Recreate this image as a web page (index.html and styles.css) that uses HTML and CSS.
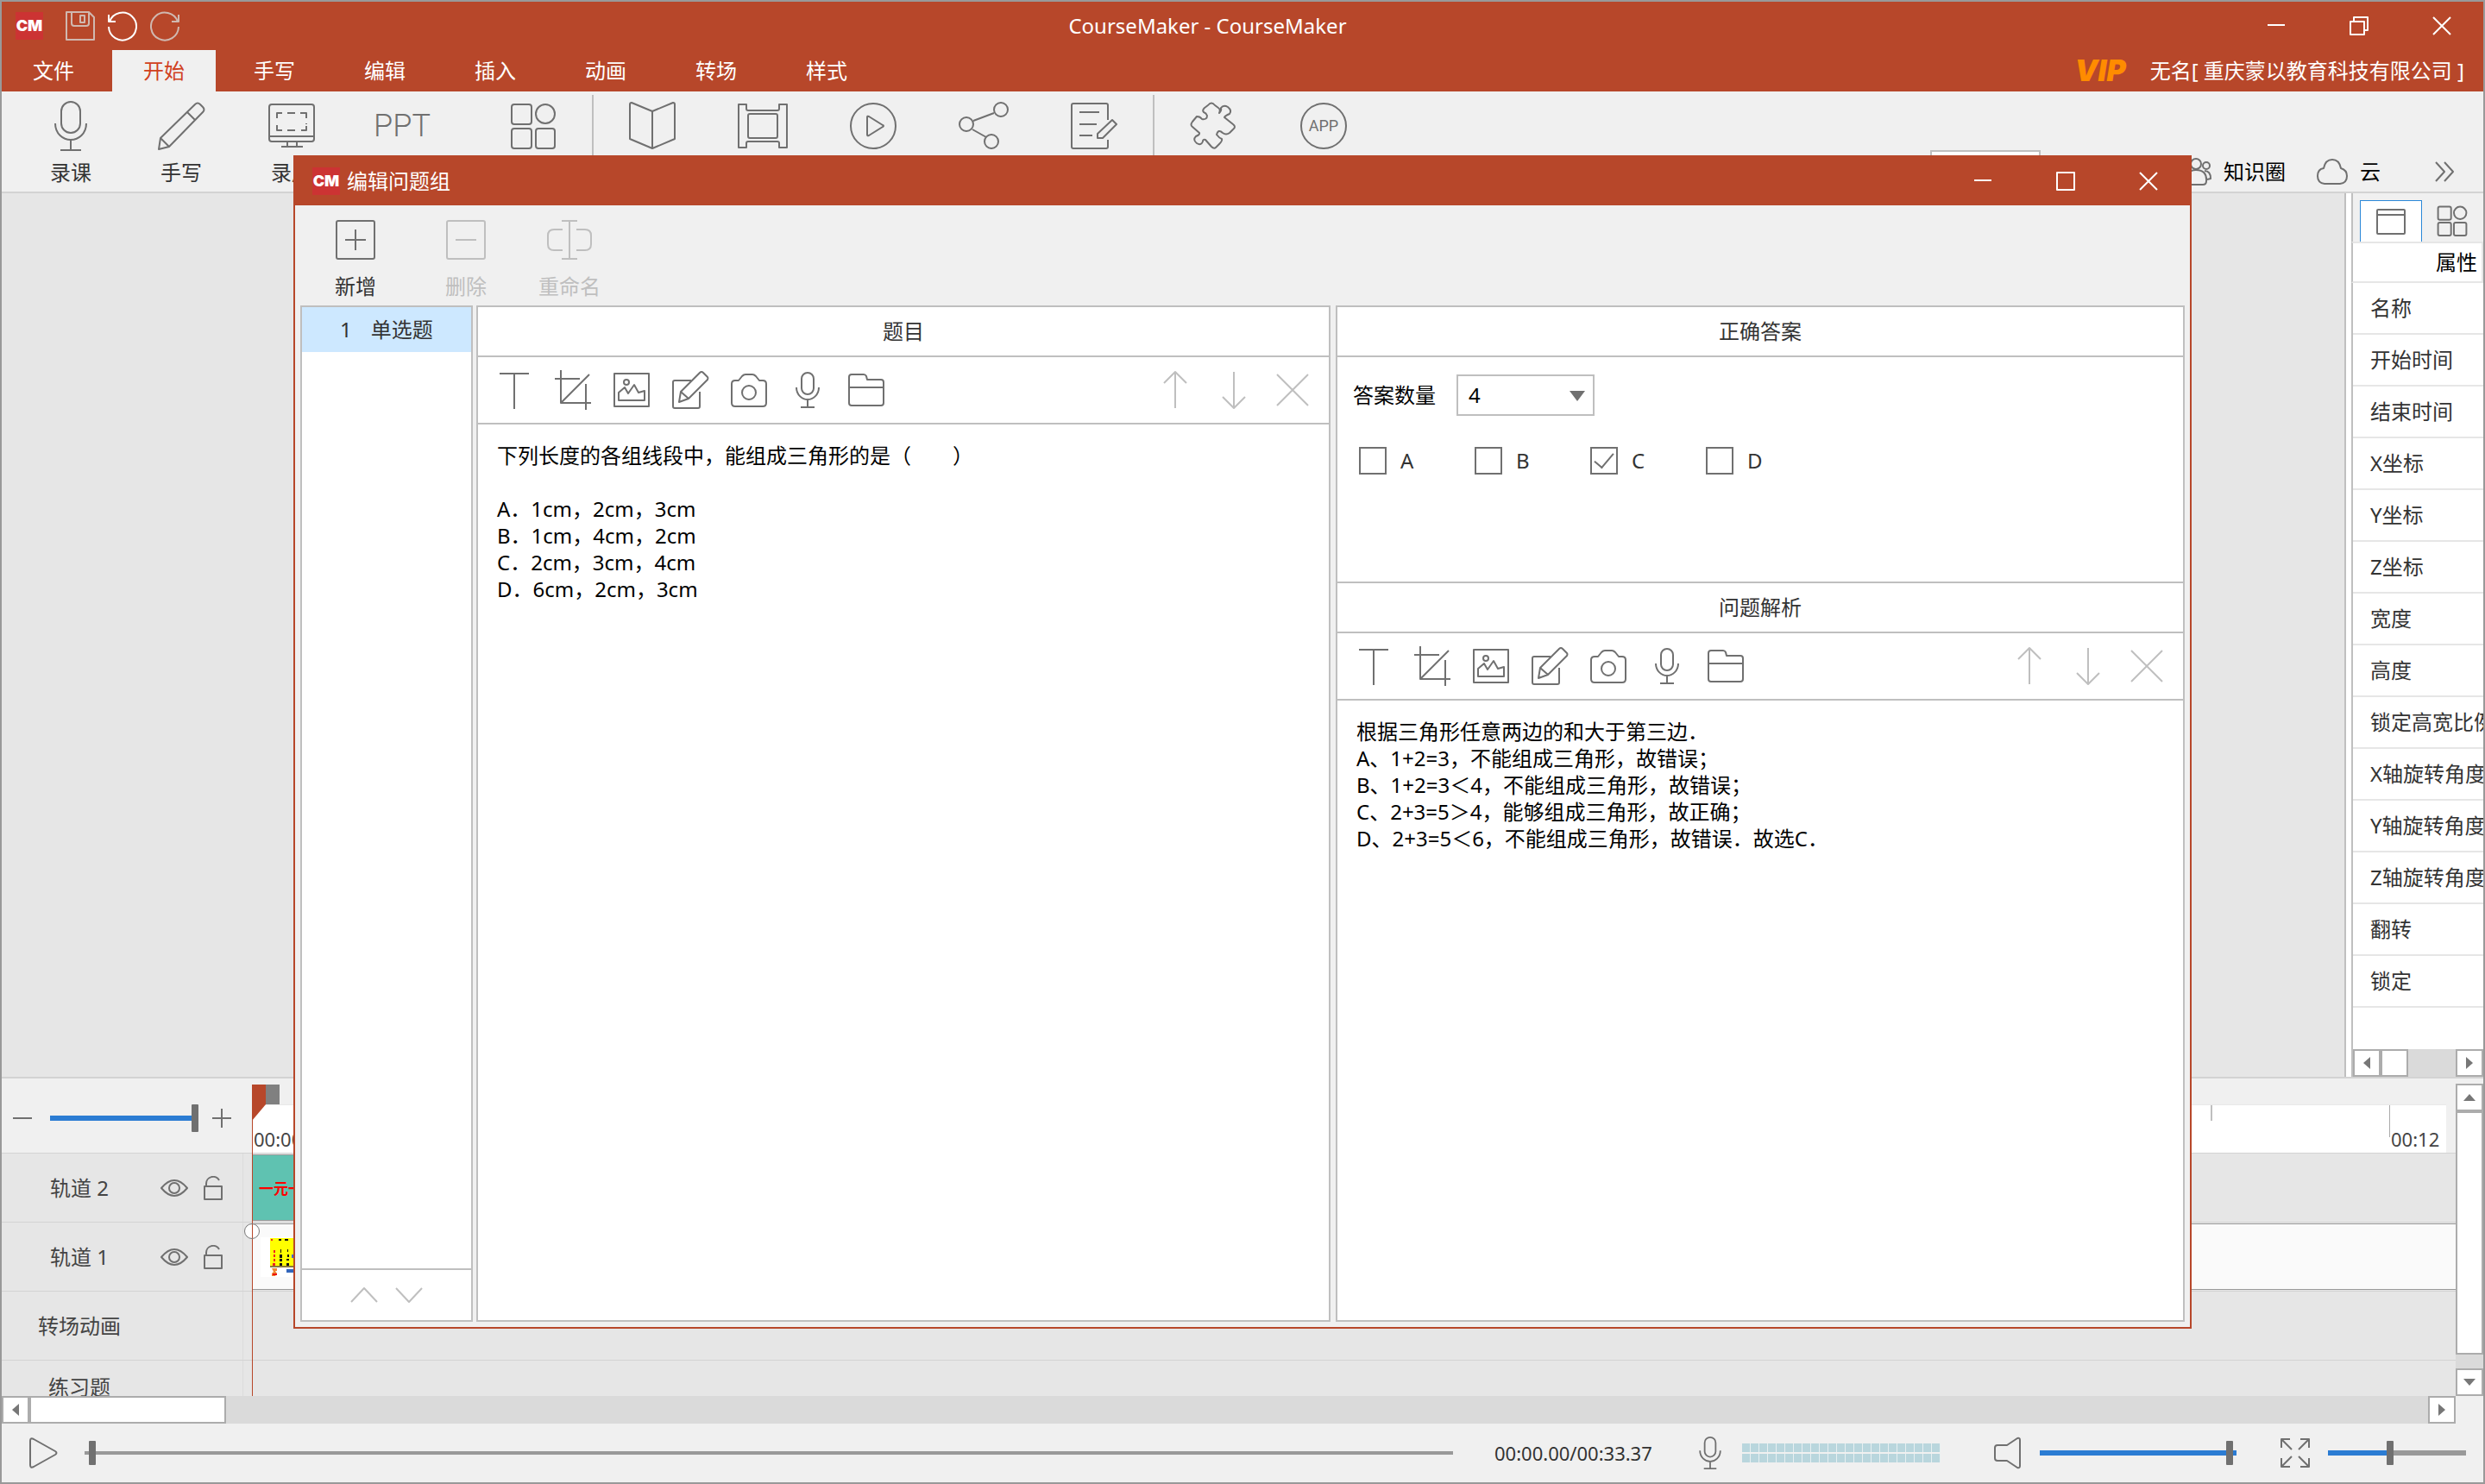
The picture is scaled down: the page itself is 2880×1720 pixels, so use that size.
FILE: index.html
```html
<!DOCTYPE html>
<html lang="zh-CN">
<head>
<meta charset="utf-8">
<title>CourseMaker - CourseMaker</title>
<link rel="stylesheet" href="styles.css">
</head>
<body>
<svg class="sprite" aria-hidden="true">
  <symbol id="i-mic" viewBox="-32 -32 64 64"><rect x="-11" y="-28" width="22" height="36" rx="11"/><path d="M-18-3C-18 9-9 16 0 16S18 9 18-3M0 16V28M-12 28H12"/></symbol>
  <symbol id="i-pencil" viewBox="-32 -32 64 64"><path d="M-26 27L-24 14 16-25Q19-28 22-25L25-22Q28-19 25-16L-14 24ZM7-16L16-7M-24 14L-14 24"/></symbol>
  <symbol id="i-screen" viewBox="-32 -32 64 64"><rect x="-26" y="-25" width="52" height="43" rx="3"/><path d="M-26 12H26M-5 18V24M6 18V24M-12 24H13M-17-9V-15H-11M-5-15H4M10-15H17V-9M17-3V-2M17 0V5H11M4 5H-5M-11 5H-17V-1"/></symbol>
  <symbol id="i-apps" viewBox="-32 -32 64 64"><rect x="-25" y="-25" width="23" height="23" rx="3"/><circle cx="14" cy="-14" r="11"/><rect x="-25" y="3" width="23" height="23" rx="3"/><rect x="3" y="3" width="22" height="23" rx="3"/></symbol>
  <symbol id="i-book" viewBox="-32 -32 64 64"><path d="M0-17L-24-27Q-26-27-26-25V15L0 26 26 15V-25Q26-27 24-27ZM0-17V26"/></symbol>
  <symbol id="i-film" viewBox="-32 -32 64 64"><path d="M-28-25H-19V-20Q-19-18-17-18H17Q19-18 19-20V-25H28V25H19V20Q19 18 17 18H-17Q-19 18-19 20V25H-28Z"/><rect x="-17" y="-14" width="34" height="28" rx="2"/></symbol>
  <symbol id="i-play" viewBox="-32 -32 64 64"><circle r="26"/><path d="M-7-10Q-7-12-5-11L11-1Q13 0 11 1L-5 11Q-7 12-7 10Z"/></symbol>
  <symbol id="i-share" viewBox="-32 -32 64 64"><circle cx="-20" cy="-2" r="8"/><circle cx="20" cy="-19" r="8"/><circle cx="9" cy="18" r="8"/><path d="M-12-6L12-15M-13 4L3 13"/></symbol>
  <symbol id="i-doc" viewBox="-32 -32 64 64"><path d="M16-7V-24Q16-26 14-26H-24Q-26-26-26-24V24Q-26 26-24 26H14Q16 26 16 24V16M-17-16H6M-17-2H3M-17 11H-2M21-7L26-2 10 14H4V9Z"/></symbol>
  <symbol id="i-puzzle" viewBox="-5 -5 64 64"><path d="M21 3Q25-2 29 3L33 6Q36 8 34 12 37 9 36 6 39 2 44 5 49 9 46 13 41 15 40 17L50 25Q54 28 50 31L46 35Q42 38 38 35 33 30 31 37 34 41 37 42 38 44 34 48L30 52Q28 54 25 51L18 43Q15 42 15 45 13 50 8 47 3 43 7 39 12 37 11 35L3 28Q0 26 3 22L8 16Q12 16 14 19 20 20 20 15 19 12 16 11 14 9 17 6Z"/></symbol>
  <symbol id="i-circle" viewBox="-32 -32 64 64"><circle r="26"/></symbol>
  <symbol id="i-people" viewBox="0 0 32 32"><circle cx="14" cy="7" r="6"/><path d="M2 30Q1 14 14 14T26 27Q26 31 22 31H4Q2 31 2 30"/><circle cx="26" cy="9" r="4"/><path d="M24 15Q31 15 31 24L27 25"/></symbol>
  <symbol id="i-cloud" viewBox="0 0 36 36"><path d="M9 32Q1 31 1 23 1 15 8 14 10 4 18 4T28 14Q35 16 35 23 35 31 27 32Z"/></symbol>
  <symbol id="i-more" viewBox="0 0 24 24"><path d="M2 1L12 12 2 23M12 1L22 12 12 23"/></symbol>
  <symbol id="i-add" viewBox="-32 -32 64 64"><rect x="-22" y="-22" width="44" height="44" rx="2"/><path d="M-12 0H12M0-12V12"/></symbol>
  <symbol id="i-remove" viewBox="-32 -32 64 64"><rect x="-22" y="-22" width="44" height="44" rx="2"/><path d="M-12 0H12"/></symbol>
  <symbol id="i-rename" viewBox="-32 -32 64 64"><path d="M0-22V22M-9-22H9M-9 22H9M-8-12H-18Q-25-12-25-5V5Q-25 12-18 12H-8M8-12H18Q25-12 25-5V5Q25 12 18 12H8"/></symbol>
  <symbol id="t-text" viewBox="-24 -24 48 48"><path d="M-17-19H17M0-19V22"/></symbol>
  <symbol id="t-crop" viewBox="-24 -24 48 48"><path d="M-14-23V15H21M-21-13H8M15-7V23M-14 15L19-18"/></symbol>
  <symbol id="t-image" viewBox="-24 -24 48 48"><rect x="-20" y="-19" width="40" height="38"/><circle cx="-6" cy="-9" r="3"/><path d="M-15 12V3L-8-3-4 4 3-6 8 3 15 1V12Z"/></symbol>
  <symbol id="t-edit" viewBox="-24 -24 48 48"><path d="M1-11H-18Q-20-11-20-9V19Q-20 21-18 21H9Q11 21 11 19V2M-13 14L-11 2 11-20Q13-22 15-20L20-15Q21-14 20-12L-2 10ZM-11 2L-2 10"/></symbol>
  <symbol id="t-camera" viewBox="-24 -24 48 48"><path d="M-20-7Q-20-11-16-11H-12L-8-16Q-6-18-4-18H4Q6-18 8-16L12-11H16Q20-11 20-7V15Q20 19 16 19H-16Q-20 19-20 15Z"/><circle cy="3" r="8"/></symbol>
  <symbol id="t-mic" viewBox="-24 -24 48 48"><rect x="-7" y="-20" width="14" height="25" rx="7"/><path d="M-13-3C-13 6-6 11 0 11S13 6 13-3M0 11V20M-8 20H8"/></symbol>
  <symbol id="t-folder" viewBox="-24 -24 48 48"><path d="M-20-15Q-20-18-17-18H-3Q-1-18 0-16L1-12H17Q20-12 20-9V15Q20 18 17 18H-17Q-20 18-20 15ZM-20-3H20"/></symbol>
  <symbol id="t-up" viewBox="-24 -24 48 48"><path d="M0 21V-20M-13-8L0-21 13-8"/></symbol>
  <symbol id="t-down" viewBox="-24 -24 48 48"><path d="M0-21V20M-13 8L0 21 13 8"/></symbol>
  <symbol id="t-close" viewBox="-24 -24 48 48"><path d="M-18-18L18 18M18-18L-18 18"/></symbol>
  <symbol id="w-min" viewBox="0 0 24 24"><path d="M2 11H22"/></symbol>
  <symbol id="w-max" viewBox="0 0 24 24"><rect x="2" y="2" width="20" height="20"/></symbol>
  <symbol id="w-restore" viewBox="0 0 24 24"><rect x="2" y="7" width="16" height="15"/><path d="M6 7V2H22V17H18"/></symbol>
  <symbol id="w-close" viewBox="0 0 24 24"><path d="M2 2L22 22M22 2L2 22"/></symbol>
  <symbol id="q-save" viewBox="0 0 36 36"><path d="M2 2H28L34 8V34H2ZM8 2V15Q8 18 11 18H25Q28 18 28 15V2M18 6H23V14H18Z"/></symbol>
  <symbol id="q-undo" viewBox="0 0 36 36"><path d="M2 5V13H10M3 13A16 16 0 1 1 2 19"/></symbol>
  <symbol id="l-eye" viewBox="0 0 32 24"><path d="M1 12Q16-6 31 12 16 30 1 12Z"/><circle cx="16" cy="12" r="6"/></symbol>
  <symbol id="l-lock" viewBox="0 0 24 28"><path d="M2 12H22V27H2ZM4 12V9A8 8 0 0 1 19 5"/></symbol>
  <symbol id="s-left" viewBox="0 0 8 14"><path d="M8 0V14L0 7Z"/></symbol>
  <symbol id="s-right" viewBox="0 0 8 14"><path d="M0 0V14L8 7Z"/></symbol>
  <symbol id="s-up" viewBox="0 0 14 8"><path d="M0 8H14L7 0Z"/></symbol>
  <symbol id="s-down" viewBox="0 0 14 8"><path d="M0 0H14L7 8Z"/></symbol>
  <symbol id="p-play" viewBox="0 0 40 40"><path d="M5 6Q5 2 9 4L34 18Q37 20 34 22L9 36Q5 38 5 34Z"/></symbol>
  <symbol id="p-speaker" viewBox="0 0 40 40"><path d="M19 11H8Q5 11 5 14V26Q5 29 8 29H19L31 37Q34 38 34 35V5Q34 2 31 3Z"/></symbol>
  <symbol id="p-full" viewBox="0 0 40 40"><path d="M4 14V4H14M4 4L16 16M26 4H36V14M36 4L24 16M4 26V36H14M4 36L16 24M26 36H36V26M36 36L24 24"/></symbol>
</svg>

<header class="titlebar">
  <div class="quick">
    <span class="logo">CM</span>
    <button type="button" class="dim" aria-label="保存"><svg class="icon s36"><use href="#q-save"/></svg></button>
    <button type="button" aria-label="撤销"><svg class="icon s36"><use href="#q-undo"/></svg></button>
    <button type="button" class="dim flip" aria-label="重做"><svg class="icon s36"><use href="#q-undo"/></svg></button>
  </div>
  <h1>CourseMaker - CourseMaker</h1>
  <div class="winctl">
    <button type="button" aria-label="最小化"><svg class="icon s24"><use href="#w-min"/></svg></button>
    <button type="button" aria-label="还原"><svg class="icon s24"><use href="#w-restore"/></svg></button>
    <button type="button" aria-label="关闭"><svg class="icon s24"><use href="#w-close"/></svg></button>
  </div>
</header>

<nav class="tabs">
  <button type="button">文件</button>
  <button type="button" class="active">开始</button>
  <button type="button">手写</button>
  <button type="button">编辑</button>
  <button type="button">插入</button>
  <button type="button">动画</button>
  <button type="button">转场</button>
  <button type="button">样式</button>
  <div class="account"><span class="vip">VIP</span><span>无名[ 重庆蒙以教育科技有限公司 ]</span></div>
</nav>

<section class="ribbon">
  <div class="group">
    <button type="button"><svg class="icon s64"><use href="#i-mic"/></svg>录课</button>
    <button type="button"><svg class="icon s64"><use href="#i-pencil"/></svg>手写</button>
    <button type="button"><svg class="icon s64"><use href="#i-screen"/></svg>录屏</button>
    <button type="button" aria-label="导入PPT"><span class="ppt">PPT</span></button>
    <button type="button" class="apart" aria-label="应用"><svg class="icon s64"><use href="#i-apps"/></svg></button>
  </div>
  <div class="group">
    <button type="button" aria-label="课本"><svg class="icon s64"><use href="#i-book"/></svg></button>
    <button type="button" aria-label="视频"><svg class="icon s64"><use href="#i-film"/></svg></button>
    <button type="button" aria-label="播放"><svg class="icon s64"><use href="#i-play"/></svg></button>
    <button type="button" aria-label="分享"><svg class="icon s64"><use href="#i-share"/></svg></button>
    <button type="button" aria-label="练习"><svg class="icon s64"><use href="#i-doc"/></svg></button>
  </div>
  <div class="group">
    <button type="button" aria-label="插件"><svg class="icon s64"><use href="#i-puzzle"/></svg></button>
    <button type="button" class="badge-btn" aria-label="APP"><svg class="icon s64"><use href="#i-circle"/></svg><span class="app">APP</span></button>
  </div>
  <div class="links">
    <input type="text" class="find" aria-label="查找">
    <a href="#"><svg class="icon s32"><use href="#i-people"/></svg>知识圈</a>
    <a href="#" class="cloud"><svg class="icon s36"><use href="#i-cloud"/></svg>云</a>
    <button type="button" class="more" aria-label="更多"><svg class="icon s24"><use href="#i-more"/></svg></button>
  </div>
</section>

<main class="workspace">
  <div class="stage"></div>
  <aside class="props">
    <div class="prop-tabs">
      <button type="button" class="active" aria-label="属性"><svg class="icon" width="36" height="32" viewBox="0 0 36 32"><rect x="2" y="2" width="32" height="28" rx="1"/><path d="M2 8H34"/></svg></button>
      <button type="button" aria-label="组件"><svg class="icon small-apps" width="42" height="42"><use href="#i-apps"/></svg></button>
    </div>
    <h2>属性</h2>
    <ul>
      <li>名称</li><li>开始时间</li><li>结束时间</li><li>X坐标</li><li>Y坐标</li><li>Z坐标</li><li>宽度</li><li>高度</li><li>锁定高宽比例</li><li>X轴旋转角度</li><li>Y轴旋转角度</li><li>Z轴旋转角度</li><li>翻转</li><li>锁定</li>
    </ul>
    <div class="scroll-h">
      <button type="button" aria-label="向左"><svg width="8" height="14"><use href="#s-left"/></svg></button>
      <div class="thumb"></div>
      <div class="space"></div>
      <button type="button" aria-label="向右"><svg width="8" height="14"><use href="#s-right"/></svg></button>
    </div>
  </aside>
</main>

<section class="timeline">
  <div class="lanes">
    <div class="lane-head">
      <div class="zoom">
        <svg class="icon s24" viewBox="0 0 24 24"><path d="M1 12H23"/></svg>
        <input type="range" class="range tall" aria-label="时间轴缩放" min="0" max="100" value="100" style="--fill:100%">
        <svg class="icon s24" viewBox="0 0 24 24"><path d="M1 12H23M12 1V23"/></svg>
      </div>
      <div class="ruler">
        <span class="mark">00:00</span>
        <span class="tick"></span>
        <span class="mark last">00:12</span>
      </div>
    </div>
    <div class="track">
      <div class="name"><span>轨道 2</span><svg class="icon eye"><use href="#l-eye"/></svg><svg class="icon lock"><use href="#l-lock"/></svg></div>
      <div class="lane"><div class="clip teal">一元一次方程</div></div>
    </div>
    <div class="track">
      <div class="name"><span>轨道 1</span><svg class="icon eye"><use href="#l-eye"/></svg><svg class="icon lock"><use href="#l-lock"/></svg></div>
      <div class="lane"><div class="clip long">
        <svg class="thumbnail" width="60" height="46" viewBox="0 0 60 46"><rect width="60" height="46" fill="#fff"/><rect x="11" y="1" width="40" height="32" fill="#ff0"/><path d="M11 34H51" stroke="#8a7a3a" stroke-width="2"/><path d="M12 2h2v2h-2zM15 15h2v3h-2zM15 20h2v3h-2zM15 25h2v3h-2zM14 30h3v3h-3z" fill="#e22"/><path d="M21 2h3v2h-3zM28 2h4v2h-4zM23 14h1v4h-1zM31 14h1v3h-1zM22 20h3v4h-3zM31 20h2v3h-2zM22 25h3v3h-3zM30 25h3v2h-3zM22 30h3v3h-3zM30 30h3v3h-3z" fill="#111"/><rect x="36" y="20" width="6" height="4" fill="#46c"/><rect x="30" y="37" width="22" height="4" fill="#36b"/><path d="M13 36h6v3h-2l2 3-2 3h-4v-3l2-2z" fill="#e83"/><path d="M14 42h5v2h-5z" fill="#e11"/></svg>
      </div></div>
    </div>
    <div class="track"><div class="name"><span>转场动画</span></div><div class="lane"></div></div>
    <div class="track tail"><div class="name"><span>练习题</span></div><div class="lane"></div></div>
    <div class="playhead"><svg width="34" height="42" viewBox="0 0 34 42"><path d="M0 0H16V23L0 42Z" fill="#b7472a"/><path d="M16 0H32V23H16Z" fill="#808080"/></svg></div>
    <div class="keyframe"></div>
  </div>
  <div class="scroll-v">
    <button type="button" aria-label="向上"><svg width="14" height="8"><use href="#s-up"/></svg></button>
    <div class="thumb"></div>
    <div class="space"></div>
    <button type="button" aria-label="向下"><svg width="14" height="8"><use href="#s-down"/></svg></button>
  </div>
  <div class="scroll-h">
    <button type="button" aria-label="向左"><svg width="8" height="14"><use href="#s-left"/></svg></button>
    <div class="thumb"></div>
    <div class="space"></div>
    <button type="button" aria-label="向右"><svg width="8" height="14"><use href="#s-right"/></svg></button>
  </div>
</section>

<footer class="player">
  <button type="button" aria-label="播放"><svg class="icon s40"><use href="#p-play"/></svg></button>
  <input type="range" class="range grey progress" aria-label="进度" min="0" max="1000" value="3" style="--fill:0%">
  <output class="time">00:00.00/00:33.37</output>
  <svg class="icon s40 mic" viewBox="-22 -22 44 44"><use href="#t-mic" x="-24" y="-24" width="48" height="48"/></svg>
  <div class="levels"></div>
  <svg class="icon s40 speaker"><use href="#p-speaker"/></svg>
  <input type="range" class="range volume" aria-label="音量" min="0" max="100" value="98" style="--fill:100%">
  <button type="button" class="full" aria-label="全屏"><svg class="icon s40"><use href="#p-full"/></svg></button>
  <input type="range" class="range scale" aria-label="画面缩放" min="0" max="100" value="45" style="--fill:45%">
</footer>

<div class="dialog" role="dialog" aria-label="编辑问题组">
  <header class="dialog-title">
    <span class="logo">CM</span>
    <h2>编辑问题组</h2>
    <div class="winctl">
      <button type="button" aria-label="最小化"><svg class="icon s24"><use href="#w-min"/></svg></button>
      <button type="button" aria-label="最大化"><svg class="icon s24"><use href="#w-max"/></svg></button>
      <button type="button" aria-label="关闭"><svg class="icon s24"><use href="#w-close"/></svg></button>
    </div>
  </header>
  <div class="dialog-tools">
    <button type="button"><svg class="icon s64"><use href="#i-add"/></svg>新增</button>
    <button type="button" class="spaced" disabled><svg class="icon s64"><use href="#i-remove"/></svg>删除</button>
    <button type="button" disabled><svg class="icon s64"><use href="#i-rename"/></svg>重命名</button>
  </div>
  <div class="dialog-body">
    <section class="pane questions">
      <ol><li class="selected"><span>1</span><span>单选题</span></li></ol>
      <div class="sorter">
        <button type="button" disabled aria-label="上移"><svg class="icon" width="32" height="20" viewBox="0 0 32 20"><path d="M1 18L16 2 31 18"/></svg></button>
        <button type="button" disabled aria-label="下移"><svg class="icon" width="32" height="20" viewBox="0 0 32 20"><path d="M1 2L16 18 31 2"/></svg></button>
      </div>
    </section>
    <section class="pane stem">
      <h3>题目</h3>
      <div class="tools">
        <button type="button" aria-label="文本"><svg class="icon s48"><use href="#t-text"/></svg></button>
        <button type="button" aria-label="截图"><svg class="icon s48"><use href="#t-crop"/></svg></button>
        <button type="button" aria-label="图片"><svg class="icon s48"><use href="#t-image"/></svg></button>
        <button type="button" aria-label="手写"><svg class="icon s48"><use href="#t-edit"/></svg></button>
        <button type="button" aria-label="拍照"><svg class="icon s48"><use href="#t-camera"/></svg></button>
        <button type="button" aria-label="录音"><svg class="icon s48"><use href="#t-mic"/></svg></button>
        <button type="button" aria-label="文件"><svg class="icon s48"><use href="#t-folder"/></svg></button>
        <button type="button" class="push" disabled aria-label="上移"><svg class="icon s48"><use href="#t-up"/></svg></button>
        <button type="button" disabled aria-label="下移"><svg class="icon s48"><use href="#t-down"/></svg></button>
        <button type="button" disabled aria-label="删除"><svg class="icon s48"><use href="#t-close"/></svg></button>
      </div>
      <div class="content">
        <p>下列长度的各组线段中，能组成三角形的是（　　）</p>
        <p class="blank"></p>
        <p>A．1cm，2cm，3cm</p>
        <p>B．1cm，4cm，2cm</p>
        <p>C．2cm，3cm，4cm</p>
        <p>D．6cm，2cm，3cm</p>
      </div>
    </section>
    <section class="pane answer">
      <h3>正确答案</h3>
      <div class="answer-form">
        <div class="count">
          <label for="count">答案数量</label>
          <div class="select"><select id="count"><option>2</option><option>3</option><option selected>4</option></select><svg width="18" height="12" viewBox="0 0 18 12"><path d="M0 0H18L9 12Z"/></svg></div>
        </div>
        <div class="choices">
          <label><input type="checkbox">A</label>
          <label><input type="checkbox">B</label>
          <label><input type="checkbox" checked>C</label>
          <label><input type="checkbox">D</label>
        </div>
      </div>
      <h3>问题解析</h3>
      <div class="tools">
        <button type="button" aria-label="文本"><svg class="icon s48"><use href="#t-text"/></svg></button>
        <button type="button" aria-label="截图"><svg class="icon s48"><use href="#t-crop"/></svg></button>
        <button type="button" aria-label="图片"><svg class="icon s48"><use href="#t-image"/></svg></button>
        <button type="button" aria-label="手写"><svg class="icon s48"><use href="#t-edit"/></svg></button>
        <button type="button" aria-label="拍照"><svg class="icon s48"><use href="#t-camera"/></svg></button>
        <button type="button" aria-label="录音"><svg class="icon s48"><use href="#t-mic"/></svg></button>
        <button type="button" aria-label="文件"><svg class="icon s48"><use href="#t-folder"/></svg></button>
        <button type="button" class="push" disabled aria-label="上移"><svg class="icon s48"><use href="#t-up"/></svg></button>
        <button type="button" disabled aria-label="下移"><svg class="icon s48"><use href="#t-down"/></svg></button>
        <button type="button" disabled aria-label="删除"><svg class="icon s48"><use href="#t-close"/></svg></button>
      </div>
      <div class="content">
        <p>根据三角形任意两边的和大于第三边．</p>
        <p>A、1+2=3，不能组成三角形，故错误；</p>
        <p>B、1+2=3＜4，不能组成三角形，故错误；</p>
        <p>C、2+3=5＞4，能够组成三角形，故正确；</p>
        <p>D、2+3=5＜6，不能组成三角形，故错误．故选C．</p>
      </div>
    </section>
  </div>
</div>
</body>
</html>
```
FILE: styles.css
```css
:root {
  --brand: #b7472a;
  --face: #f0f0f0;
  --canvas: #e6e6e6;
  --line: #bfbfbf;
  --rule: #d3d3d3;
  --ink: #333;
  --icon: #707070;
  --blue: #2b7cd3;
}
* { box-sizing: border-box; }
body {
  margin: 0;
  height: 100vh;
  display: flex;
  flex-direction: column;
  position: relative;
  overflow: hidden;
  border: 2px solid #999;
  background: var(--face);
  color: var(--ink);
  font: 24px/32px "Noto Sans", "Noto Sans CJK SC", sans-serif;
}
h1, h2, h3, p, ul, ol { margin: 0; padding: 0; font: inherit; list-style: none; }
button {
  margin: 0;
  padding: 0;
  border: 0;
  background: none;
  color: inherit;
  font: inherit;
  display: flex;
  align-items: center;
  justify-content: center;
}
a { color: #000; text-decoration: none; }
.sprite { position: absolute; width: 0; height: 0; }
.icon { display: block; flex: none; fill: none; stroke: var(--icon); stroke-width: 2; stroke-linejoin: round; }
.s24 { width: 24px; height: 24px; }
.s32 { width: 32px; height: 32px; }
.s36 { width: 36px; height: 36px; }
.s40 { width: 40px; height: 40px; }
.s48 { width: 48px; height: 48px; }
.s64 { width: 64px; height: 64px; }
button:disabled { color: var(--line); }
button:disabled .icon { stroke: var(--line); }

/* title bar */
.titlebar {
  flex: none;
  height: 56px;
  display: flex;
  align-items: center;
  background: var(--brand);
  color: #fff;
}
.titlebar h1 { flex: 1; text-align: center; }
.quick { display: flex; align-items: center; gap: 13px; padding-left: 16px; }
.logo {
  width: 32px;
  height: 32px;
  background: #c33;
  color: #fff;
  font: 900 18px/32px Inter, sans-serif;
  display: flex;
  justify-content: center;
}
.quick .logo { margin-right: 12px; }
.titlebar .icon, .dialog-title .icon { stroke: #fff; }
.quick .dim .icon { stroke: #d0b8b0; }
.flip { transform: scaleX(-1); }
.winctl { display: flex; justify-content: flex-end; }
.winctl button { width: 96px; height: 56px; }

.tabs { flex: none; height: 48px; display: flex; gap: 8px; background: var(--brand); color: #fff; }
.tabs button { width: 120px; }
.tabs .active { background: var(--face); color: #d04020; }
.account { margin-left: auto; padding-right: 22px; display: flex; align-items: center; gap: 28px; }
.vip { color: #ff8c00; font: italic 900 34px/32px Inter, sans-serif; }

/* ribbon */
.ribbon { flex: none; height: 118px; display: flex; padding-left: 16px; border-bottom: 2px solid var(--rule); }
.group { display: flex; margin: 4px 4px 0 0; padding-right: 4px; }
.group:not(:nth-child(3)) { border-right: 2px solid var(--line); }
.group button { width: 128px; flex-direction: column; justify-content: flex-start; gap: 6px; padding-top: 4px; }
.group .apart { margin-left: 24px; }
.ppt { font: 300 36px/64px Roboto, sans-serif; color: var(--icon); }
.group .badge-btn { display: grid; justify-items: center; justify-content: center; align-content: start; }
.badge-btn > * { grid-area: 1 / 1; }
.app { font: 18px/64px Roboto, sans-serif; color: var(--icon); }
.links { margin-left: auto; display: flex; align-items: center; padding: 68px 33px 0 0; margin-bottom: -2px; }
.links a { display: flex; align-items: center; gap: 14px; }
.find { width: 128px; height: 50px; margin-right: 166px; border: 2px solid var(--line); background: #fff; }
.links .cloud { margin-left: 36px; }
.more { margin-left: 62px; }

/* stage and properties */
.workspace { flex: 1; min-height: 0; display: flex; background: var(--canvas); }
.stage { flex: 1; border-right: 2px solid var(--line); }
.props {
  width: 159px;
  display: flex;
  flex-direction: column;
  border-left: 6px solid #fff;
  background: #fff;
  overflow: hidden;
  white-space: nowrap;
}
.props > * { border-left: 2px solid var(--line); }
.prop-tabs { flex: none; height: 56px; padding: 8px 0 0 8px; display: flex; background: var(--face); }
.prop-tabs button { width: 72px; height: 48px; }
.prop-tabs .active { background: #fff; border: 1px solid #2b88d8; border-bottom: 0; }
.small-apps { stroke-width: 3; }
.props h2 { height: 48px; padding-right: 5px; text-align: right; line-height: 44px; color: #000; border-top: 2px solid var(--canvas); border-bottom: 2px solid var(--canvas); border-right: 2px solid var(--canvas); }
.props ul { flex: 1; }
.props li { height: 60px; line-height: 58px; padding-left: 20px; border-bottom: 2px solid var(--canvas); }

/* scroll bars */
.scroll-h, .scroll-v { display: flex; background: #dadada; }
.scroll-h { height: 32px; }
.scroll-v { flex-direction: column; }
.scroll-h button, .scroll-v button { flex: none; width: 32px; height: 32px; background: #fff; border: 2px solid #acacac; }
.scroll-h svg, .scroll-v svg { fill: #777; display: block; }
.scroll-h .space, .scroll-v .space { flex: 1; }
.thumb { background: #fff; border: 2px solid #acacac; }
.props .thumb { width: 32px; }

/* timeline */
.timeline {
  flex: none;
  height: 402px;
  border-top: 2px solid var(--rule);
  display: grid;
  grid-template-columns: 1fr 32px;
  grid-template-rows: 368px 32px;
}
.lanes { position: relative; overflow: hidden; background: var(--canvas); }
.lane-head { height: 87px; display: flex; background: var(--face); border-bottom: 1px solid var(--rule); color: #444; }
.zoom { width: 290px; flex: none; display: flex; align-items: center; gap: 15px; padding: 6px 0 0 12px; }
.zoom .range { width: 172px; margin-left: 5px; }
.ruler { flex: 1; margin: 30px 11px 0 0; height: 56px; display: flex; background: #fff; border-top: 1px solid #e8e8e8; font-size: 22px; }
.mark { padding: 23px 0 0 2px; flex: 1; }
.tick { width: 207px; height: 18px; border-left: 2px solid var(--line); }
.mark.last { flex: none; width: 66px; background: linear-gradient(#aaa, #aaa) no-repeat 0 0 / 1px 37px; }
.track { height: 80px; display: flex; border-bottom: 1px solid var(--rule); color: #444; }
.name { width: 280px; flex: none; border-right: 1px solid #dcdcdc; display: flex; align-items: center; }
.name span { width: 180px; text-align: center; }
.eye { width: 32px; height: 24px; margin-left: 4px; }
.lock { width: 24px; height: 28px; margin-left: 17px; }
.tail { height: 62px; border-bottom: 0; }
.lane { flex: 1; padding: 1px 0 0 10px; }
.clip { height: 77px; border: 1px solid #999; border-right: 0; }
.teal { width: 240px; background: #5fc2b1; color: #f00; font: 700 17px/76px "Noto Sans CJK SC", sans-serif; padding-left: 7px; white-space: nowrap; overflow: hidden; }
.long { background: #fafafa; padding: 15px 0 0 9px; }
.thumbnail { display: block; }
.playhead { position: absolute; left: 290px; top: 7px; bottom: 0; border-left: 1px solid var(--brand); }
.playhead svg { display: block; margin-left: -1px; }
.keyframe { position: absolute; left: 281px; top: 168px; width: 18px; height: 18px; border: 1px solid #777; border-radius: 50%; background: linear-gradient(var(--brand), var(--brand)) no-repeat 8px 0 / 1px 100% #fff; }
.scroll-v { margin-top: 6px; }
.scroll-v .thumb { height: 282px; }
.timeline .scroll-h .thumb { width: 228px; }

/* range controls */
.range { appearance: none; margin: 0; height: 32px; background: linear-gradient(90deg, var(--blue) var(--fill), #999 var(--fill)) no-repeat center / 100% 6px; }
.range::-webkit-slider-thumb { appearance: none; width: 8px; height: 28px; border-radius: 1px; background: var(--icon); }
.tall::-webkit-slider-thumb { height: 32px; }
.grey { background-size: 100% 4px; }

/* player */
.player { flex: none; height: 68px; display: flex; align-items: center; padding: 0 20px 0 28px; }
.progress { flex: 1; margin-left: 28px; }
.time { width: 184px; margin-left: 48px; font-size: 22px; white-space: nowrap; }
.mic { margin-left: 46px; }
.levels {
  width: 230px;
  height: 22px;
  margin-left: 17px;
  background:
    linear-gradient(var(--face), var(--face)) no-repeat 0 10px / 100% 2px,
    repeating-linear-gradient(90deg, #b9d6dd 0 9px, #e8f0f2 9px 10px);
}
.speaker { margin-left: 58px; }
.volume { width: 228px; margin-left: 17px; }
.full { margin-left: 48px; }
.scale { width: 160px; margin-left: 18px; }

/* dialog window, floating over the editor */
.dialog { position: absolute; inset: 178px 338px; display: flex; flex-direction: column; border: 2px solid var(--brand); background: var(--face); }
.dialog-title { flex: none; height: 56px; display: flex; align-items: center; padding-left: 20px; background: var(--brand); color: #fff; }
.dialog-title h2 { margin-left: 8px; }
.dialog-title .winctl { margin-left: auto; }
.dialog-tools { flex: none; height: 116px; display: flex; padding: 8px 0 0 10px; }
.dialog-tools button { width: 120px; flex-direction: column; justify-content: flex-start; gap: 6px; }
.dialog-tools .spaced { margin-left: 8px; }
.dialog-body { flex: 1; min-height: 0; display: flex; padding: 0 6px 6px; }
.pane { display: flex; flex-direction: column; border: 2px solid var(--line); background: #fff; }
.questions { width: 200px; flex: none; margin-right: 4px; }
.questions ol { flex: 1; }
.questions li { display: flex; height: 52px; align-items: center; gap: 22px; padding-left: 44px; }
.selected { background: #cde8ff; }
.sorter { height: 60px; display: flex; align-items: center; justify-content: center; gap: 20px; border-top: 2px solid var(--line); }
.stem { flex: 990 1 0; margin-right: 6px; }
.answer { flex: 984 1 0; }
.pane h3 { height: 58px; line-height: 56px; text-align: center; border-bottom: 2px solid var(--line); }
.tools { height: 78px; display: flex; align-items: center; padding: 0 8px; border-bottom: 2px solid var(--line); }
.tools button { width: 68px; height: 68px; }
.tools .push { margin-left: auto; }
.content { padding: 20px 22px; color: #000; line-height: 31px; }
.blank { height: 31px; }
.answer-form { height: 262px; padding: 20px 18px; border-bottom: 2px solid var(--line); }
.count { display: flex; align-items: center; gap: 24px; color: #000; }
.select { position: relative; }
.select select { appearance: none; display: block; width: 160px; height: 48px; padding: 0 12px; border: 2px solid var(--line); border-radius: 0; background: #fff; color: #000; font: inherit; }
.select svg { position: absolute; right: 11px; top: 19px; fill: var(--icon); pointer-events: none; }
.choices { display: flex; padding: 36px 0 0 7px; }
.choices label { width: 134px; display: flex; align-items: center; gap: 16px; }
.choices input { appearance: none; margin: 0; width: 32px; height: 32px; border: 2px solid var(--icon); display: grid; place-items: center; }
.choices input:checked::before { content: ""; width: 20px; height: 10px; margin-top: -6px; border: solid var(--icon); border-width: 0 0 2px 2px; transform: rotate(-50deg); }
```
